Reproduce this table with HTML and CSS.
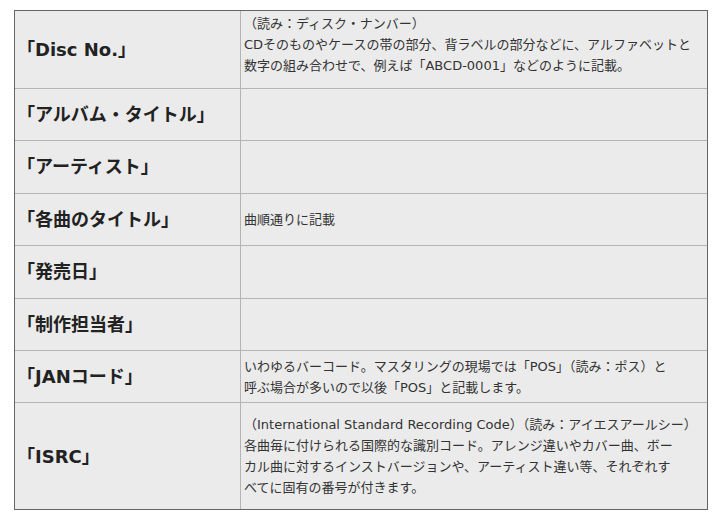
FILE: index.html
```html
<!DOCTYPE html>
<html lang="ja">
<head>
<meta charset="utf-8">
<link rel="stylesheet" href="styles.css">
</head>
<body>
<table class="spec">
  <tr>
    <td class="label">「Disc No.」</td>
    <td class="desc desc-first">（読み：ディスク・ナンバー）<br>CDそのものやケースの帯の部分、背ラベルの部分などに、アルファベットと<br>数字の組み合わせで、例えば「ABCD-0001」などのように記載。</td>
  </tr>
  <tr>
    <td class="label">「アルバム・タイトル」</td>
    <td class="desc"></td>
  </tr>
  <tr>
    <td class="label">「アーティスト」</td>
    <td class="desc"></td>
  </tr>
  <tr>
    <td class="label">「各曲のタイトル」</td>
    <td class="desc">曲順通りに記載</td>
  </tr>
  <tr>
    <td class="label">「発売日」</td>
    <td class="desc"></td>
  </tr>
  <tr>
    <td class="label">「制作担当者」</td>
    <td class="desc"></td>
  </tr>
  <tr>
    <td class="label">「JANコード」</td>
    <td class="desc">いわゆるバーコード。マスタリングの現場では「POS」（読み：ポス）と<br>呼ぶ場合が多いので以後「POS」と記載します。</td>
  </tr>
  <tr class="last">
    <td class="label">「ISRC」</td>
    <td class="desc desc-last">（International Standard Recording Code）（読み：アイエスアールシー）<br>各曲毎に付けられる国際的な識別コード。アレンジ違いやカバー曲、ボー<br>カル曲に対するインストバージョンや、アーティスト違い等、それぞれす<br>べてに固有の番号が付きます。</td>
  </tr>
</table>
</body>
</html>
```

FILE: styles.css
```css
html, body {
  margin: 0;
  padding: 0;
  background: #ffffff;
}

body {
  padding: 10px 13px 0 14px;
  font-family: "DejaVu Sans", "Noto Sans CJK JP", sans-serif;
  color: #333333;
}

.spec {
  width: 694px;
  border: 1px solid #666666;
  border-spacing: 0;
  background: #ebebeb;
  table-layout: fixed;
}

.spec td {
  border-right: 1px solid #b4b4b4;
  border-bottom: 1px solid #b4b4b4;
  vertical-align: middle;
}

.spec td:last-child {
  border-right: none;
}

.spec tr.last td {
  border-bottom: none;
}

.label {
  width: 222px;
  padding: 13px 1px 13px 2px;
  font-size: 18px;
  line-height: 25.4px;
  font-weight: bold;
  color: #222222;
  white-space: nowrap;
}

.desc {
  padding: 4px 3px;
  font-size: 13px;
  line-height: 21px;
  white-space: nowrap;
}

.desc-first {
  padding: 2px 3px 12px;
}

.desc-last {
  padding: 11px 3px;
}
```
